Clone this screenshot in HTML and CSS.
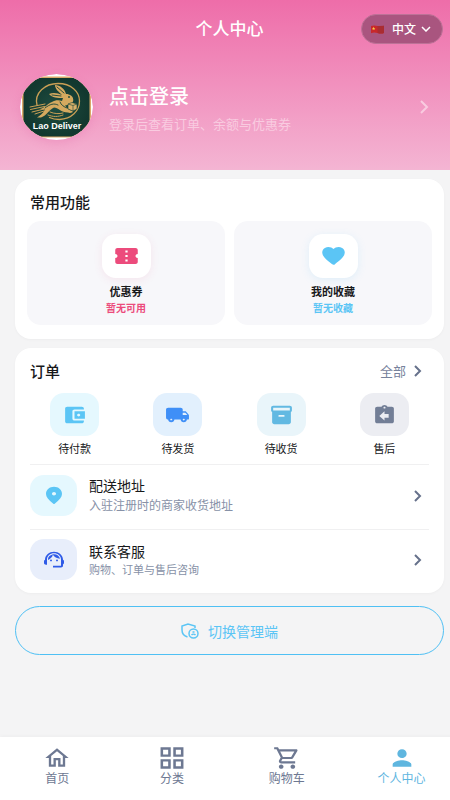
FILE: index.html
```html
<!DOCTYPE html>
<html lang="zh-CN">
<head>
    <meta charset="UTF-8">
    <meta name="viewport" content="width=device-width, initial-scale=1.0">
    <title>个人中心 - Lao Deliver</title>
    <link rel="stylesheet" href="styles.css">
</head>
<body>
    <div class="page">
        <header class="header">
            <div class="top-bar">
                <h1 class="page-title">个人中心</h1>
                <button type="button" class="lang-btn">
                    <svg class="flag" viewBox="0 0 13 9" aria-hidden="true">
                        <path d="M0 1Q3 0 6.500 1T13 .8V8Q10 9 6.500 8T0 8.200Z" fill="#c8282b"/>
                        <path d="M6.500 1T13 .8V8Q10 9 6.500 8Z" fill="#a92c31"/>
                        <path d="M2.600 1.800l.5 1.100 1.200.1-.9.800.3 1.200-1.100-.6-1 .6.2-1.200-.8-.8 1.100-.1z" fill="#f6c945"/>
                    </svg>
                    <span>中文</span>
                    <svg class="caret" viewBox="0 0 10 6" aria-hidden="true"><path d="M1 1l4 4 4-4"/></svg>
                </button>
            </div>
            <a href="#login" class="profile">
                <svg class="avatar" viewBox="0 0 73 66" aria-hidden="true">
                    <defs>
                        <clipPath id="avatar-clip"><ellipse cx="36.5" cy="33" rx="36.5" ry="33"/></clipPath>
                        <radialGradient id="avatar-green">
                            <stop offset="0" stop-color="#1f4d41"/>
                            <stop offset="1" stop-color="#12382f"/>
                        </radialGradient>
                    </defs>
                    <g clip-path="url(#avatar-clip)">
                        <rect width="73" height="66" fill="#fff"/>
                        <rect x="2" y="2.500" width="69" height="61" rx="3" fill="#d9a968"/>
                        <rect x="3.500" y="4" width="66" height="58.500" rx="3" fill="url(#avatar-green)"/>
                        <g fill="none" stroke="#c99f55" stroke-linecap="round">
                            <path stroke-width="1.300" d="M17 31C14 19 25 9.500 38 9.500c13 0 21.500 8 21.500 17.500 0 10-8 18-20 18.500-4 0-7-.5-10-2"/>
                            <path stroke-width="1" d="M10 33l15-3M10.500 35.500l14-3M12 38l12-3M15 40l9-3M28 41c5 2 10 2 15 0M30 38c5 2 9 2 13 1"/>
                        </g>
                        <path d="M46 20c-1-5-6-9-11-9 0 4 4 7 7 10-4-2-9-3-13-1 3 4 9 4 14 4l-1 3c-3-1-7-1-10 1-5 2-7 6-12 7l5 .500c-2 4-5 6-8 8h4c6-2 8-8 13-10 4 0 7 5 14 5 2 1 5 0 5-1-3-1-6-3-8-6l5-1c2-1 4-3 3-6 0-2-3-4.500-7-4.500z" fill="#d5a95f"/>
                        <g fill="none" stroke="#17443a" stroke-width=".9" stroke-linecap="round">
                            <path d="M37 13l7 6M32 21l9 1M25 34c5-4 9-5 13-3M40 28c1 3 4 5 7 6"/>
                        </g>
                        <path d="M48 30l4-1.500 5 1.500v5l-4 2-5-2z" fill="#d9b06a" stroke="#17443a" stroke-width=".6"/>
                        <path d="M48 30l5 1.500 4-1.500M53 31.500V37" fill="none" stroke="#17443a" stroke-width=".6"/>
                        <circle cx="49" cy="23" r=".9" fill="#17443a"/>
                        <text class="avatar-text" x="37" y="55" text-anchor="middle">Lao Deliver</text>
                    </g>
                </svg>
                <span class="profile-text">
                    <strong>点击登录</strong>
                    <small>登录后查看订单、余额与优惠券</small>
                </span>
                <svg class="profile-arrow" viewBox="0 0 9 14" aria-hidden="true"><path d="M1 1l6 6-6 6"/></svg>
            </a>
        </header>

        <main class="content">
            <section class="card">
                <h2>常用功能</h2>
                <div class="tiles">
                    <a href="#coupons" class="tile tile-pink">
                        <span class="tile-icon">
                            <svg viewBox="0 0 24 24" preserveAspectRatio="none" aria-hidden="true"><path d="M22 10V6c0-1.100-.9-2-2-2H4c-1.100 0-2 .9-2 2v4c1.100 0 2 .9 2 2s-.9 2-2 2v4c0 1.100.9 2 2 2h16c1.100 0 2-.9 2-2v-4c-1.100 0-2-.9-2-2s.9-2 2-2zm-9 7.500h-2v-2h2v2zm0-4.500h-2v-2h2v2zm0-4.500h-2v-2h2v2z"/></svg>
                        </span>
                        <strong>优惠券</strong>
                        <small>暂无可用</small>
                    </a>
                    <a href="#favorites" class="tile tile-blue">
                        <span class="tile-icon">
                            <svg viewBox="0 0 24 24" preserveAspectRatio="none" aria-hidden="true"><path d="M13.350 20.130c-.76.690-1.930.690-2.690-.01l-.11-.1C5.300 15.270 1.870 12.160 2 8.280c.06-1.700.93-3.330 2.340-4.290 2.640-1.800 5.900-.96 7.660 1.100 1.760-2.060 5.020-2.910 7.660-1.100 1.410.96 2.280 2.590 2.340 4.290.14 3.880-3.300 6.990-8.550 11.760l-.1.090z"/></svg>
                        </span>
                        <strong>我的收藏</strong>
                        <small>暂无收藏</small>
                    </a>
                </div>
            </section>

            <section class="card orders">
                <div class="card-head">
                    <h2>订单</h2>
                    <a href="#orders" class="more">全部
                        <svg class="arrow" viewBox="0 0 8 12" aria-hidden="true"><path d="M1 1l5 5-5 5"/></svg>
                    </a>
                </div>
                <div class="order-types">
                    <a href="#unpaid" class="order-type">
                        <span class="order-icon cyan">
                            <svg viewBox="0 0 24 24" preserveAspectRatio="none" aria-hidden="true"><path d="M21 18v1c0 1.100-.9 2-2 2H5c-1.110 0-2-.9-2-2V5c0-1.100.89-2 2-2h14c1.100 0 2 .9 2 2v1h-9c-1.110 0-2 .9-2 2v8c0 1.100.89 2 2 2h9zm-9-2h10V8H12v8zm4-2.500c-.83 0-1.500-.67-1.500-1.500s.67-1.500 1.500-1.500 1.500.67 1.500 1.500-.67 1.500-1.500 1.500z"/></svg>
                        </span>
                        待付款
                    </a>
                    <a href="#unshipped" class="order-type">
                        <span class="order-icon blue">
                            <svg viewBox="0 0 24 24" preserveAspectRatio="none" aria-hidden="true"><path d="M19.500 8H17V6c0-1.100-.9-2-2-2H3c-1.100 0-2 .9-2 2v9c0 1.100.9 2 2 2 0 1.660 1.340 3 3 3s3-1.340 3-3h6c0 1.660 1.340 3 3 3s3-1.340 3-3h1c.55 0 1-.45 1-1v-3.330c0-.43-.14-.85-.4-1.200L20.300 8.400c-.19-.25-.49-.4-.8-.4zM6 18c-.55 0-1-.45-1-1s.45-1 1-1 1 .45 1 1-.45 1-1 1zm13.500-8.500 1.960 2.500H17V9.500h2.500zM18 18c-.55 0-1-.45-1-1s.45-1 1-1 1 .45 1 1-.45 1-1 1z"/></svg>
                        </span>
                        待发货
                    </a>
                    <a href="#shipped" class="order-type">
                        <span class="order-icon sky">
                            <svg viewBox="0 0 24 24" preserveAspectRatio="none" aria-hidden="true"><path d="M20 2H4c-1 0-2 .9-2 2v3.010c0 .72.430 1.340 1 1.690V20c0 1.100 1.100 2 2 2h14c.9 0 2-.9 2-2V8.700c.57-.35 1-.97 1-1.690V4c0-1.100-1-2-2-2zm-6 12h-4c-.55 0-1-.45-1-1s.45-1 1-1h4c.55 0 1 .45 1 1s-.45 1-1 1zm6-7H4V4h16v3z"/></svg>
                        </span>
                        待收货
                    </a>
                    <a href="#after-sale" class="order-type">
                        <span class="order-icon gray">
                            <svg viewBox="0 0 24 24" preserveAspectRatio="none" aria-hidden="true"><path d="M19 3h-4.180C14.400 1.840 13.300 1 12 1s-2.400.84-2.820 2H5c-1.100 0-2 .9-2 2v14c0 1.100.9 2 2 2h14c1.100 0 2-.9 2-2V5c0-1.100-.9-2-2-2zm-7 0c.55 0 1 .45 1 1s-.45 1-1 1-1-.45-1-1 .45-1 1-1zm4 12h-4v3l-5-5 5-5v3h4v4z"/></svg>
                        </span>
                        售后
                    </a>
                </div>
                <a href="#address" class="row row-address">
                    <span class="row-icon cyan">
                        <svg viewBox="0 0 24 24" preserveAspectRatio="none" aria-hidden="true"><path d="M12 2c-4.200 0-8 3.220-8 8.200 0 3.180 2.450 6.920 7.340 11.230.38.330.95.330 1.330 0C17.550 17.120 20 13.380 20 10.200 20 5.220 16.200 2 12 2zm0 10c-1.100 0-2-.9-2-2s.9-2 2-2 2 .9 2 2-.9 2-2 2z"/></svg>
                    </span>
                    <span class="row-text">
                        <span class="row-title">配送地址</span>
                        <span class="row-note">入驻注册时的商家收货地址</span>
                    </span>
                    <svg class="arrow" viewBox="0 0 8 12" aria-hidden="true"><path d="M1 1l5 5-5 5"/></svg>
                </a>
                <a href="#service" class="row row-service">
                    <span class="row-icon indigo">
                        <svg viewBox="0 0 24 24" preserveAspectRatio="none" aria-hidden="true"><path d="M21 12.220C21 6.730 16.740 3 12 3c-4.690 0-9 3.650-9 9.280-.6.340-1 .98-1 1.720v2c0 1.100.9 2 2 2h1v-6.100c0-3.870 3.130-7 7-7s7 3.130 7 7V19h-8v2h8c1.100 0 2-.9 2-2v-1.220c.59-.31 1-.92 1-1.640v-2.300c0-.7-.41-1.310-1-1.620z"/><circle cx="9" cy="13" r="1"/><circle cx="15" cy="13" r="1"/><path d="M18 11.030C17.520 8.180 15.040 6 12.050 6c-3.030 0-6.290 2.510-6.030 6.450 2.470-1.010 4.330-3.210 4.860-5.890 1.310 2.630 4 4.440 7.120 4.470z"/></svg>
                    </span>
                    <span class="row-text">
                        <span class="row-title">联系客服</span>
                        <span class="row-note">购物、订单与售后咨询</span>
                    </span>
                    <svg class="arrow" viewBox="0 0 8 12" aria-hidden="true"><path d="M1 1l5 5-5 5"/></svg>
                </a>
            </section>

            <button type="button" class="switch-btn">
                <svg viewBox="0 0 18 16" aria-hidden="true">
                    <path d="M14 5V3L7 1 1 3v4c0 3.500 2 6 5.500 7"/>
                    <circle cx="12.500" cy="10.500" r="4.500"/>
                    <path d="M11.500 9h2M10.500 12c1-1 3-1 4 0"/>
                </svg>
                切换管理端
            </button>
        </main>

        <nav class="tab-bar">
            <a href="#home">
                <svg viewBox="0 0 24 24" preserveAspectRatio="none" aria-hidden="true"><path d="M12 5.690l5 4.500V18h-2v-6H9v6H7v-7.810l5-4.500M12 3L2 12h3v8h6v-6h2v6h6v-8h3L12 3z"/></svg>
                首页
            </a>
            <a href="#category">
                <svg viewBox="1 1 22 22" preserveAspectRatio="none" aria-hidden="true"><path d="M3 3v8h8V3H3zm6 6H5V5h4v4zm-6 4v8h8v-8H3zm6 6H5v-4h4v4zm4-16v8h8V3h-8zm6 6h-4V5h4v4zm-6 4v8h8v-8h-8zm6 6h-4v-4h4v4z"/></svg>
                分类
            </a>
            <a href="#cart">
                <svg viewBox="0 0 24 24" preserveAspectRatio="none" aria-hidden="true"><path d="M15.550 13c.75 0 1.410-.41 1.750-1.030l3.580-6.490c.37-.66-.11-1.480-.87-1.480H5.210l-.94-2H1v2h2l3.600 7.590-1.350 2.440C4.520 15.370 5.480 17 7 17h12v-2H7l1.100-2h7.450zM6.160 6h12.150l-2.760 5H8.530L6.160 6zM7 18c-1.100 0-1.990.9-1.990 2S5.900 22 7 22s2-.9 2-2-.9-2-2-2zm10 0c-1.100 0-1.990.9-1.990 2s.89 2 1.990 2 2-.9 2-2-.9-2-2-2z"/></svg>
                购物车
            </a>
            <a href="#me" class="active">
                <svg viewBox="0 0 24 24" preserveAspectRatio="none" aria-hidden="true"><path d="M12 12c2.210 0 4-1.790 4-4s-1.790-4-4-4-4 1.790-4 4 1.790 4 4 4zm0 2c-2.670 0-8 1.340-8 4v2h16v-2c0-2.660-5.330-4-8-4z"/></svg>
                个人中心
            </a>
        </nav>
    </div>
</body>
</html>
```
FILE: styles.css
```css
/* Reset */
* {
    margin: 0;
    padding: 0;
    box-sizing: border-box;
}

body {
    font-family: "Noto Sans", "Noto Sans CJK SC", sans-serif;
    color: #17181a;
    background-color: #f4f4f5;
    overflow-x: hidden;
}

a {
    color: inherit;
    text-decoration: none;
}

button {
    font-family: inherit;
    cursor: pointer;
}

svg {
    display: block;
    flex-shrink: 0;
}

/* The page runs a little past the right edge of the window */
.page {
    display: flex;
    flex-direction: column;
    width: calc(100% + 9px);
    min-height: 100vh;
}

/* Header */
.header {
    padding: 14px 16px 30px;
    background: linear-gradient(#ee6da9, #f4b5d3);
    color: #fff;
}

.top-bar {
    display: grid;
    grid-template-columns: 1fr auto 1fr;
    align-items: center;
    height: 30px;
}

.page-title {
    grid-column: 2;
    font-size: 17px;
    font-weight: 500;
    line-height: 24px;
}

.lang-btn {
    display: flex;
    align-items: center;
    justify-self: end;
    gap: 5px;
    height: 30px;
    padding: 0 11px 0 9px;
    border: 1px solid #bd7297;
    border-radius: 15px;
    background-color: #a9557f;
    color: #fff;
    font-size: 12px;
    font-weight: 500;
}

.flag {
    width: 13px;
    height: 9px;
    margin-right: 3px;
}

.caret {
    width: 10px;
    height: 6px;
}

.caret path,
.arrow path,
.profile-arrow path {
    fill: none;
    stroke: currentColor;
    stroke-width: 2;
}

.caret path {
    stroke-width: 1.5;
}

.profile {
    display: flex;
    align-items: center;
    gap: 16px;
    margin-top: 30px;
    padding: 0 14px 0 4px;
}

.avatar {
    width: 73px;
    height: 66px;
    border-radius: 50%;
    box-shadow: 0 3px 10px rgba(220, 80, 150, 0.2);
}

.avatar-text {
    font: bold 9px "Liberation Sans", sans-serif;
    fill: #fff;
}

.profile-text {
    display: flex;
    flex: 1;
    flex-direction: column;
    padding-top: 3px;
}

.profile-text strong {
    font-size: 20px;
    font-weight: 500;
    line-height: 30px;
}

.profile-text small {
    font-size: 13px;
    line-height: 24px;
    color: #f9cbe0;
}

.profile-arrow {
    width: 9px;
    height: 14px;
    color: #f9cbe0;
}

/* Cards */
.content {
    display: flex;
    flex-direction: column;
    gap: 9px;
    padding: 9px 15px;
}

.card {
    padding: 12px 12px 14px;
    border-radius: 16px;
    background-color: #fff;
    box-shadow: 0 1px 3px rgba(0, 0, 0, 0.03);
}

h2 {
    padding-left: 3px;
    font-size: 15px;
    font-weight: 500;
    line-height: 22px;
}

.tiles {
    display: grid;
    grid-template-columns: 1fr 1fr;
    gap: 9px;
    margin-top: 8px;
}

.tile {
    display: flex;
    flex-direction: column;
    align-items: center;
    padding: 13px 0 9px;
    border-radius: 14px;
    background-color: #f7f7fa;
}

.tile-icon {
    display: flex;
    align-items: center;
    justify-content: center;
    width: 49px;
    height: 44px;
    margin-bottom: 6px;
    border-radius: 14px;
    background-color: #fff;
}

.tile-icon svg {
    width: 27px;
    height: 24px;
    fill: currentColor;
}

.tile strong {
    font-size: 11px;
    font-weight: 700;
    line-height: 16px;
}

.tile small {
    font-size: 10px;
    font-weight: 700;
    line-height: 16px;
}

.tile-pink .tile-icon,
.tile-pink small {
    color: #ec4b7c;
}

.tile-blue .tile-icon,
.tile-blue small {
    color: #5bc5f5;
}

.tile-pink .tile-icon {
    box-shadow: 0 2px 8px rgba(236, 75, 124, 0.1);
}

.tile-blue .tile-icon {
    box-shadow: 0 2px 8px rgba(91, 197, 245, 0.15);
}

/* Orders */
.orders {
    padding: 12px 15px 4px;
}

.card-head {
    display: flex;
    align-items: center;
    justify-content: space-between;
}

.card-head h2 {
    padding-left: 0;
}

.more {
    display: flex;
    align-items: center;
    gap: 8px;
    padding-right: 7px;
    font-size: 13px;
    line-height: 22px;
    color: #77829c;
}

.arrow {
    width: 8px;
    height: 12px;
    color: #66718b;
}

.order-types {
    display: grid;
    grid-template-columns: repeat(4, 1fr);
    margin: 11px -7px 7px;
}

.order-type {
    display: flex;
    flex-direction: column;
    align-items: center;
    gap: 5px;
    font-size: 11px;
    line-height: 16px;
}

.order-icon,
.row-icon {
    display: flex;
    align-items: center;
    justify-content: center;
    border-radius: 14px;
}

.order-icon {
    width: 49px;
    height: 43px;
}

.order-icon svg {
    width: 25px;
    height: 22px;
    fill: currentColor;
}

.cyan {
    background-color: #e5f8fe;
    color: #5bc5f5;
}

.blue {
    background-color: #e2f0fd;
    color: #3f8ff7;
}

.sky {
    background-color: #e9f5fa;
    color: #62b9e2;
}

.gray {
    background-color: #ecedf2;
    color: #727e96;
}

.indigo {
    background-color: #e8eefb;
    color: #2f5be7;
}

.row {
    display: flex;
    align-items: center;
    gap: 12px;
    padding-right: 7px;
    border-top: 1px solid #f0f0f1;
}

.row-address {
    padding-top: 10px;
    padding-bottom: 13px;
}

.row-service {
    padding-top: 9px;
    padding-bottom: 9px;
}

.row-icon {
    width: 47px;
    height: 41px;
}

.row-icon svg {
    width: 24px;
    height: 21px;
    fill: currentColor;
}

.row-text {
    display: flex;
    flex: 1;
    flex-direction: column;
}

.row-title {
    font-size: 14px;
    line-height: 21px;
}

.row-note {
    font-size: 12px;
    line-height: 20px;
    color: #8791a7;
}

.row-service .row-note {
    font-size: 11px;
    line-height: 16px;
}

/* Switch button */
.switch-btn {
    display: flex;
    align-items: center;
    justify-content: center;
    gap: 9px;
    height: 49px;
    margin-top: 4px;
    border: 1px solid #4fc0f4;
    border-radius: 25px;
    background-color: transparent;
    color: #5bc5f5;
    font-size: 14px;
}

.switch-btn svg {
    width: 18px;
    height: 16px;
    fill: none;
    stroke: currentColor;
    stroke-width: 1.5;
}

/* Bottom tabs */
.tab-bar {
    display: grid;
    grid-template-columns: repeat(4, 1fr);
    height: 63px;
    margin-top: auto;
    padding-top: 8px;
    background-color: #fff;
    box-shadow: 0 -1px 4px rgba(0, 0, 0, 0.03);
}

.tab-bar a {
    display: flex;
    flex-direction: column;
    align-items: center;
    font-size: 12px;
    line-height: 16px;
    color: #6d7892;
}

.tab-bar svg {
    width: 28px;
    height: 26px;
    fill: currentColor;
}

.tab-bar .active {
    color: #5fb6df;
}
```
